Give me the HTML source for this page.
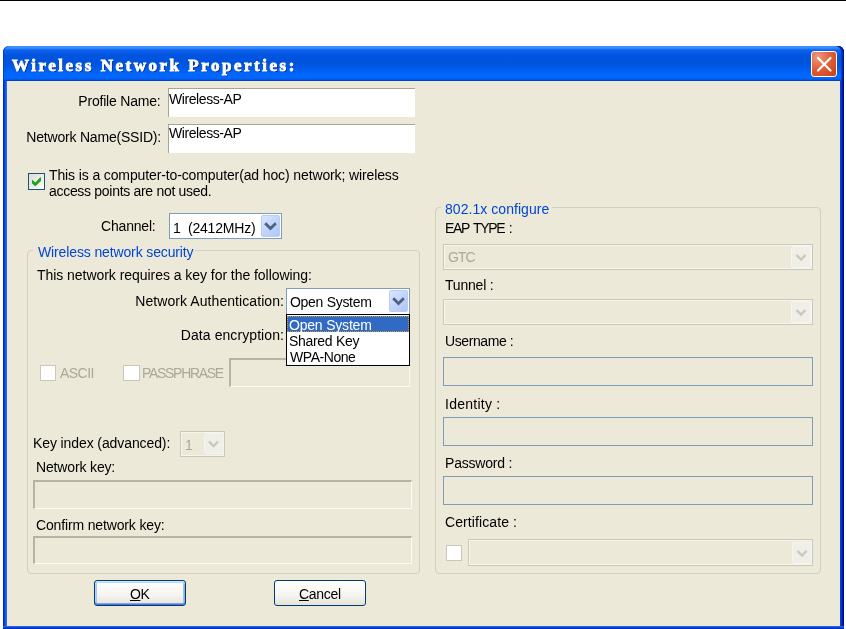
<!DOCTYPE html>
<html><head><meta charset="utf-8">
<style>
html,body{margin:0;padding:0;}
body{width:846px;height:629px;position:relative;overflow:hidden;background:#fff;font-family:"Liberation Sans",sans-serif;}
.a{position:absolute;box-sizing:border-box;}
.t{position:absolute;will-change:transform;font-family:"Liberation Sans",sans-serif;font-size:14px;letter-spacing:-0.2px;line-height:18px;white-space:pre;color:#000;}
.r{text-align:right;}
.dis{color:#ACA899;}
.blue{color:#0046D5;}
#topline{left:0;top:0;width:846px;height:1px;background:#000;}

#title{left:3px;top:46px;width:841px;height:35px;border-radius:6px 6px 0 0;box-shadow:inset 1px 0 0 #0838D8,inset -1px 0 0 #00168C,inset -2px 0 0 #0028B0,inset -3px 0 0 #003CD0;
 background:linear-gradient(to bottom,#3D92FF 0px,#3D8EFF 2px,#0E62F0 4px,#0054DE 9px,#0053DD 17px,#005CEC 23px,#0068FF 29px,#0064FA 33px,#0036BE 35px);}
#lb{left:3px;top:81px;width:4px;height:548px;background:linear-gradient(to right,#0019CF,#0838E0,#1660E8,#2A70EE);}
#rb{left:840px;top:81px;width:4px;height:548px;background:linear-gradient(to right,#1048E0,#0032D0,#00199A,#000080);}
#bb{left:3px;top:625.5px;width:841px;height:4px;background:linear-gradient(to bottom,#2E6EEA 0%,#0B4ADE 35%,#0022B4 70%,#00138C 100%);}
#body{left:7px;top:81px;width:833px;height:544.5px;background:#ECE9D8;}
#ttext{left:12px;top:55px;font-family:"Liberation Serif",serif;font-weight:bold;font-size:17px;letter-spacing:2.52px;-webkit-text-stroke:0.8px #fff;line-height:22px;color:#fff;white-space:pre;text-shadow:1px 1px 0 #0A1A70;will-change:transform;}
#close{left:811px;top:51px;width:26px;height:26px;border:1px solid #fff;border-radius:3px;
 background:radial-gradient(circle at 25% 20%,#EC9A80 0%,#E2603A 45%,#D44A1C 80%,#C03A10 100%);}
.edit{background:#fff;border-top:1.5px solid #A8A592;border-left:1.5px solid #A8A592;}
.sunk{border-top:2px solid #B6B3A3;border-left:2px solid #B6B3A3;border-right:1.5px solid #FBFAF6;border-bottom:1.5px solid #FBFAF6;}
.combo{background:#fff;border:1px solid #7F9DB9;}
.cbtn{position:absolute;box-sizing:border-box;border-radius:2px;background:linear-gradient(135deg,#DCE6FC 0%,#C2D4FB 50%,#B0C6F6 100%);border:1px solid #BACCF5;}
.dcombo{border:1.3px solid #CAC8BB;background:#ECE9D8;box-shadow:inset 0 0 0 1px #F7F5EE;}
.dbtn{position:absolute;box-sizing:border-box;border-radius:2px;background:#EFEEE7;border:1px solid #F5F4EF;}
.gb{border:1px solid #D0D0BF;border-radius:4px;}
.bluebox{border:1.2px solid #7F9DB9;}
.chk{border:1.3px solid #CAC8BB;background:#fff;}
.btn{border:1px solid #003C74;border-radius:3px;background:linear-gradient(to bottom,#FFFFFF 0%,#F5F4EF 60%,#E6E3D8 100%);}
u{text-decoration:underline;text-underline-offset:1px;text-decoration-thickness:1px;}
</style></head><body>
<div class="a" id="topline"></div>
<div class="a" id="title"></div>
<div class="a" id="lb"></div>
<div class="a" id="rb"></div>
<div class="a" id="bb"></div>
<div class="a" id="body"></div>
<div class="a" id="ttext">Wireless Network Properties:</div>
<div class="a" id="close">
 <svg width="24" height="24" style="position:absolute;left:0;top:0" viewBox="0 0 24 24"><path d="M6 6 L18.5 18.5 M18.5 6 L6 18.5" stroke="#fff" stroke-width="2.2" stroke-linecap="round"/></svg>
</div>

<!-- left labels -->
<div class="t r" style="left:0;width:160.5px;top:92px">Profile Name:</div>
<div class="a edit" style="left:168px;top:87.5px;width:247px;height:29px"></div>
<div class="t" style="left:169px;top:90px;letter-spacing:-0.42px">Wireless-AP</div>
<div class="t r" style="left:0;width:161px;top:128px">Network Name(SSID):</div>
<div class="a edit" style="left:168px;top:123.5px;width:247px;height:29px"></div>
<div class="t" style="left:169px;top:124px;letter-spacing:-0.42px">Wireless-AP</div>

<!-- checkbox -->
<div class="a" style="left:28px;top:173px;width:17px;height:17px;border:1.3px solid #1C5180;background:linear-gradient(135deg,#DCDCD7 0%,#F0F0EA 60%,#FFFFFF 100%);"></div>
<svg class="a" style="left:28px;top:173px" width="17" height="17" viewBox="0 0 17 17"><path d="M4.5 7.6 L7.3 10.3 L12.5 5 L12.5 7.5 L7.3 12.6 L4.5 10 Z" fill="#21A121" stroke="#21A121" stroke-width="1.1" stroke-linejoin="round"/></svg>
<div class="t" style="left:48.5px;top:165.5px;letter-spacing:-0.12px">This is a computer-to-computer(ad hoc) network; wireless</div>
<div class="t" style="left:48.5px;top:182px;letter-spacing:-0.3px">access points are not used.</div>

<!-- channel -->
<div class="t r" style="left:0;width:155.5px;top:217px">Channel:</div>
<div class="a combo" style="left:169px;top:213px;width:113px;height:26px"></div>
<div class="cbtn" style="left:261px;top:215px;width:19px;height:22px"></div>
<svg class="a" style="left:261px;top:215px" width="19" height="22" viewBox="0 0 19 22"><path d="M4.2 8.2 L9.5 13.5 L14.8 8.2" fill="none" stroke="#4D6185" stroke-width="2.8"/></svg>
<div class="t" style="left:172.5px;top:218.5px">1  (2412MHz)</div>

<!-- group 1 -->
<div class="a gb" style="left:26.5px;top:250px;width:393px;height:323.5px"></div>
<div class="a" style="left:33px;top:244px;width:162px;height:12px;background:#ECE9D8"></div>
<div class="t blue" style="left:37.5px;top:243px;letter-spacing:-0.13px">Wireless network security</div>
<div class="t" style="left:37px;top:266px;letter-spacing:-0.045px">This network requires a key for the following:</div>
<div class="t r" style="left:0;width:284px;top:292px;letter-spacing:0.07px">Network Authentication:</div>
<div class="a combo" style="left:286px;top:287.5px;width:124px;height:27px"></div>
<div class="cbtn" style="left:388.5px;top:290px;width:19px;height:22px"></div>
<svg class="a" style="left:388.5px;top:290px" width="19" height="22" viewBox="0 0 19 22"><path d="M4.2 8.2 L9.5 13.5 L14.8 8.2" fill="none" stroke="#4D6185" stroke-width="2.8"/></svg>
<div class="t" style="left:290px;top:292.5px;letter-spacing:-0.3px">Open System</div>
<div class="t r" style="left:0;width:284px;top:326px;letter-spacing:0.08px">Data encryption:</div>

<!-- ascii row -->
<div class="a chk" style="left:39.5px;top:365px;width:16.5px;height:16px"></div>
<div class="t dis" style="left:59.5px;top:364px;letter-spacing:-0.55px">ASCII</div>
<div class="a chk" style="left:123px;top:364.7px;width:16.5px;height:16px"></div>
<div class="t dis" style="left:141.5px;top:364px;letter-spacing:-1.3px">PASSPHRASE</div>
<div class="a sunk" style="left:229px;top:358px;width:181px;height:29px"></div>

<!-- dropdown list -->
<div class="a" style="left:286px;top:314px;width:124px;height:51.5px;border:1px solid #000;background:#fff"></div>
<div class="a" style="left:287px;top:315.5px;width:122px;height:16px;background:#316AC5;outline:1px dotted #C89A2C;outline-offset:-1px"></div>
<div class="t" style="left:289px;top:315.5px;color:#fff">Open System</div>
<div class="t" style="left:289px;top:332px;letter-spacing:-0.3px">Shared Key</div>
<div class="t" style="left:289.5px;top:348px;letter-spacing:-0.44px">WPA-None</div>

<!-- key index -->
<div class="t" style="left:33px;top:434px;letter-spacing:-0.1px">Key index (advanced):</div>
<div class="a dcombo" style="left:180px;top:430.5px;width:45px;height:26px"></div>
<div class="dbtn" style="left:204px;top:433px;width:19.5px;height:21px"></div>
<svg class="a" style="left:204px;top:433px" width="19" height="21" viewBox="0 0 19 21"><path d="M5 8.5 L9.5 13 L14 8.5" fill="none" stroke="#CAC8BB" stroke-width="2.4"/></svg>
<div class="t dis" style="left:184.5px;top:435.5px">1</div>
<div class="t" style="left:35.5px;top:458px;letter-spacing:-0.15px">Network key:</div>
<div class="a sunk" style="left:33px;top:480px;width:379px;height:28.5px"></div>
<div class="t" style="left:35.5px;top:516px;letter-spacing:-0.15px">Confirm network key:</div>
<div class="a sunk" style="left:33px;top:535.5px;width:379px;height:28.5px"></div>

<!-- group 2 -->
<div class="a gb" style="left:435px;top:206.5px;width:385.5px;height:367px"></div>
<div class="a" style="left:441px;top:200px;width:111px;height:12px;background:#ECE9D8"></div>
<div class="t blue" style="left:444.5px;top:200px;letter-spacing:0.05px">802.1x configure</div>
<div class="t" style="left:445px;top:219px;letter-spacing:-1.35px;word-spacing:2px">EAP TYPE :</div>
<div class="a dcombo" style="left:443.4px;top:244px;width:369.6px;height:25.5px"></div>
<div class="dbtn" style="left:791.2px;top:245.6px;width:20.3px;height:22.4px"></div>
<svg class="a" style="left:791.2px;top:245.6px" width="20" height="22" viewBox="0 0 20 22"><path d="M5.5 9 L10 13.5 L14.5 9" fill="none" stroke="#CAC8BB" stroke-width="2.4"/></svg>
<div class="t dis" style="left:447.5px;top:248px;letter-spacing:-1px">GTC</div>
<div class="t" style="left:445px;top:276px">Tunnel :</div>
<div class="a dcombo" style="left:443px;top:299px;width:370px;height:26px"></div>
<div class="dbtn" style="left:791.2px;top:301px;width:20.3px;height:22.4px"></div>
<svg class="a" style="left:791.2px;top:301px" width="20" height="22" viewBox="0 0 20 22"><path d="M5.5 9 L10 13.5 L14.5 9" fill="none" stroke="#CAC8BB" stroke-width="2.4"/></svg>
<div class="t" style="left:445px;top:332px;letter-spacing:-0.4px">Username :</div>
<div class="a bluebox" style="left:443px;top:357px;width:370px;height:29px"></div>
<div class="t" style="left:445px;top:394.5px;letter-spacing:0.25px">Identity :</div>
<div class="a bluebox" style="left:443px;top:417px;width:370px;height:28.5px"></div>
<div class="t" style="left:445px;top:454px">Password :</div>
<div class="a bluebox" style="left:443px;top:476px;width:370px;height:28.5px"></div>
<div class="t" style="left:445px;top:513px;letter-spacing:0.1px">Certificate :</div>
<div class="a chk" style="left:445.6px;top:545.3px;width:16px;height:16px"></div>
<div class="a dcombo" style="left:468.3px;top:539px;width:344.7px;height:27px"></div>
<div class="dbtn" style="left:791.5px;top:541.5px;width:20px;height:22px"></div>
<svg class="a" style="left:791.5px;top:541.5px" width="20" height="22" viewBox="0 0 20 22"><path d="M5.5 9 L10 13.5 L14.5 9" fill="none" stroke="#CAC8BB" stroke-width="2.4"/></svg>

<!-- buttons -->
<div class="a btn" style="left:94px;top:580px;width:92px;height:26px;box-shadow:inset 0 1px 0 #CEE7FF,inset 0 2px 0 #BCD8FC,inset 0 -1px 0 #4C78DC,inset 0 -2px 0 #7EA2EC,inset 1px 0 0 #B7D4FB,inset 2px 0 0 #A8C6F6,inset -1px 0 0 #89ADE4,inset -2px 0 0 #A0BEF2"></div>
<div class="t" style="left:130px;top:584.5px;letter-spacing:-0.5px"><u>O</u>K</div>
<div class="a btn" style="left:274px;top:580px;width:92px;height:26px"></div>
<div class="t" style="left:298.5px;top:584.5px;letter-spacing:-0.3px"><u>C</u>ancel</div>
</body></html>
